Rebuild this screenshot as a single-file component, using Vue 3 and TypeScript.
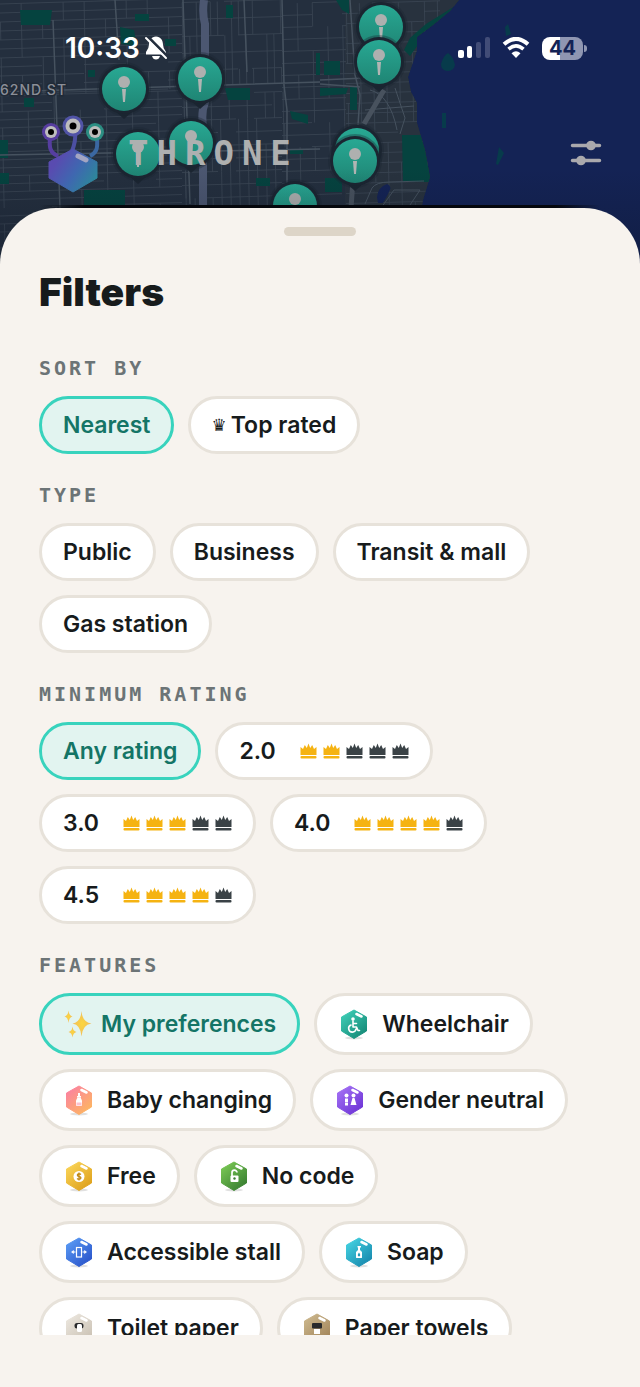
<script setup lang="ts">
import { ref } from 'vue'

type Feature = { id: string; label: string; from?: string; to?: string }

const sort = ref('Nearest')
const rating = ref('Any rating')
const chosenTypes = ref<string[]>([])
const chosenFeatures = ref<string[]>(['prefs'])

const types = ['Public', 'Business', 'Transit & mall', 'Gas station']
const ratings = [
  { label: '2.0', crowns: 2 },
  { label: '3.0', crowns: 3 },
  { label: '4.0', crowns: 4 },
  { label: '4.5', crowns: 4 },
]
const features: Feature[] = [
  { id: 'prefs', label: 'My preferences' },
  { id: 'wheelchair', label: 'Wheelchair', from: '#3fd0b8', to: '#138573' },
  { id: 'baby', label: 'Baby changing', from: '#fb7fa4', to: '#fdba5c' },
  { id: 'gender', label: 'Gender neutral', from: '#a573f5', to: '#6a30d4' },
  { id: 'free', label: 'Free', from: '#fbd65a', to: '#dc9d17' },
  { id: 'nocode', label: 'No code', from: '#7ccb55', to: '#34792f' },
  { id: 'stall', label: 'Accessible stall', from: '#5b9df5', to: '#2750c8' },
  { id: 'soap', label: 'Soap', from: '#45d4e2', to: '#1584ab' },
  { id: 'tp', label: 'Toilet paper', from: '#ece7df', to: '#c9c0b2' },
  { id: 'towels', label: 'Paper towels', from: '#cdb98f', to: '#a08257' },
]

function toggle(list: string[], id: string): string[] {
  return list.includes(id) ? list.filter((x) => x !== id) : [...list, id]
}

const pins = [
  { x: 381, y: 27 },
  { x: 379, y: 62 },
  { x: 124, y: 89 },
  { x: 200, y: 79 },
  { x: 191, y: 143 },
  { x: 138, y: 154 },
  { x: 357, y: 150 },
  { x: 355, y: 161 },
  { x: 295, y: 206 },
]

let seed = 11
function rand(): number {
  seed = (seed * 16807) % 2147483647
  return seed / 2147483647
}

/* Street blocks: a slightly tilted lattice with random gaps. */
function lattice(x0: number, y0: number, x1: number, y1: number, sx: number, sy: number): string {
  let d = ''
  for (let y = y0; y <= y1; y += sy) {
    for (let x = x0; x < x1; x += sx * 2) {
      if (rand() < 0.86) {
        const e = Math.min(x + sx * 2, x1)
        d += `M${x} ${(y - x * 0.03).toFixed(1)}L${e} ${(y - e * 0.03).toFixed(1)}`
      }
    }
  }
  for (let x = x0; x <= x1; x += sx) {
    for (let y = y0; y < y1; y += sy * 2) {
      if (rand() < 0.7) {
        const e = Math.min(y + sy * 2, y1)
        d += `M${(x + y * 0.02).toFixed(1)} ${(y - x * 0.03).toFixed(1)}L${(x + e * 0.02).toFixed(1)} ${(e - x * 0.03).toFixed(1)}`
      }
    }
  }
  return d
}
const streets = [
  lattice(0, 4, 182, 96, 21, 9),
  lattice(0, 96, 182, 280, 26, 8),
  lattice(182, 8, 282, 92, 7, 17),
  lattice(182, 100, 282, 240, 9, 13),
  lattice(282, 12, 346, 240, 15, 12),
  lattice(346, 14, 440, 240, 13, 10),
].join('')
</script>

<template>
  <div class="screen">
    <svg class="map" viewBox="0 0 640 280" preserveAspectRatio="xMidYMin slice" aria-hidden="true">
      <defs>
        <clipPath id="land">
          <path d="M0 0H459L450 11L433 25L417 37L417 50L408 77L411 92L417 103L417 123L425 150L430 177L423 200L410 280H0Z" />
        </clipPath>
        <linearGradient id="pinFill" x1="0" y1="0" x2="0" y2="1">
          <stop offset="0" stop-color="#28a893" />
          <stop offset="1" stop-color="#1f8574" />
        </linearGradient>
        <linearGradient id="shade" x1="0" y1="0" x2="0" y2="1">
          <stop offset="0.6" stop-color="#0c1424" stop-opacity="0" />
          <stop offset="0.85" stop-color="#0c1424" stop-opacity="0.25" />
        </linearGradient>
        <linearGradient id="edge" x1="0" y1="0" x2="1" y2="0">
          <stop offset="0" stop-color="#05070c" stop-opacity="0" />
          <stop offset="0.08" stop-color="#05070c" />
          <stop offset="0.92" stop-color="#05070c" />
          <stop offset="1" stop-color="#05070c" stop-opacity="0" />
        </linearGradient>
      </defs>
      <rect width="640" height="280" fill="#142355" />
      <g clip-path="url(#land)">
        <rect width="460" height="280" fill="#242f3e" />
        <rect x="345" width="120" height="280" fill="#28323e" />
        <path :d="streets" fill="none" stroke="#3b4654" stroke-width="0.8" />
        <path
          fill="#05433f"
          d="M20 10H52L50 25H21ZM135 14H149V21H135ZM120 27L134 30L137 46L121 44ZM226 5H233V18H226ZM225 88H250V100H228ZM24 98H34V107H24ZM0 140H8V158H0ZM0 173H9V184H0ZM84 190H125V206H84ZM290 111L308 115V124L292 119ZM316 53H320V75H316ZM324 61H340V75H324ZM320 88H348L346 94L320 96ZM350 87H357V110H350ZM336 0H349V14L342 10ZM402 135H440V182H403ZM426 24L455 6V20L436 32L420 42L410 56L404 50L410 38ZM256 178H270V186H256ZM290 150H303V154H290ZM325 178H342V192H325ZM165 39H176V46H165ZM88 70H95V77H88Z"
        />
        <g fill="none" stroke="#46525f" stroke-width="1.5">
          <path d="M0 92L320 82M183 0L190 204M282 0L284 85L287 110V208M0 155L320 149M53 20L60 208M320 80L365 78M320 84L360 87M350 0L355 75L360 95L358 125M244 0L247 72M115 0L119 60" />
          <path d="M365 204L372 188Q376 182 390 182L424 181M381 208L394 190H420L408 208M370 90Q390 95 397 130M365 110L414 106M395 88L405 118L400 134" stroke-width="1" />
        </g>
        <path d="M204 0Q202 14 205 24L205 102Q201 112 203 126V208" fill="none" stroke="#4c5771" stroke-width="8" />
        <path d="M384 90L364 124M353 180L351 208" fill="none" stroke="#48525e" stroke-width="5" />
        <path d="M377 197Q378 187 387 184Q393 186 388 194L383 203H378Z" fill="#142355" />
      </g>
      <path fill="#073b4b" d="M441 64Q443 56 448 53Q453 56 455 65Q454 71 447 71Q441 70 441 64ZM505 27L508 24L511 34L506 36ZM442 113H446V128H442ZM499 147L504 153L498 165L496 164Z" />
      <text class="street" x="0" y="95">62ND ST</text>
      <g v-for="p in pins" :key="`${p.x}-${p.y}`" :transform="`translate(${p.x} ${p.y})`">
        <path d="M-9 22L0 30L9 22Z" fill="#1b2531" />
        <circle r="27" fill="#1b2531" opacity="0.35" />
        <circle r="25" fill="#1b2531" />
        <circle r="22" fill="url(#pinFill)" />
        <path d="M-2 0H2L1 13H-1Z" fill="#b1b5b3" />
        <circle cy="-7" r="6" fill="#aeb0af" />
      </g>
      <rect width="640" height="280" fill="url(#shade)" />
      <rect x="40" y="205" width="560" height="5" fill="url(#edge)" />
    </svg>

    <header class="top">
      <div class="status">
        <div class="clock">
          <span>10:33</span>
          <svg width="24" height="24" viewBox="0 0 24 24" aria-hidden="true">
            <path d="M12 0.500C7.500 1 5 4 5 8.500Q5 12.500 2 16V18.500H22V16Q19 12.500 19 8.500C19 4 16.500 1 12 0.500Z" fill="#fff" />
            <path d="M8 20H16Q15 23.500 12 23.500Q9 23.500 8 20Z" fill="#fff" />
            <path d="M3 0L23 20" stroke="#242f3e" stroke-width="3" />
            <path d="M2 2L22 22" stroke="#fff" stroke-width="2" stroke-linecap="round" />
          </svg>
        </div>
        <div class="signals">
          <svg width="32" height="22" viewBox="0 0 32 22" aria-hidden="true">
            <rect y="13" width="6" height="8" rx="2" fill="#fff" />
            <rect x="9" y="9" width="5" height="12" rx="2" fill="#fff" />
            <rect x="18" y="5" width="5" height="16" rx="2" fill="#414c77" />
            <rect x="27" y="0" width="5" height="21" rx="2" fill="#414c77" />
          </svg>
          <svg width="28" height="22" viewBox="0 0 28 22" aria-hidden="true">
            <path d="M2 7.200Q14-3.500 26 7.200" fill="none" stroke="#fff" stroke-width="4" />
            <path d="M6.500 12.200Q14 5.500 21.500 12.200" fill="none" stroke="#fff" stroke-width="3.600" />
            <path d="M9.500 16.200Q14 12.400 18.500 16.200L14 21Z" fill="#fff" />
          </svg>
          <div class="power"><span class="battery">44</span><i class="nub"></i></div>
        </div>
      </div>
      <div class="brand">
        <svg class="logo" width="64" height="80" viewBox="0 0 64 80" aria-hidden="true">
          <defs>
            <linearGradient id="body" x1="0" y1="0.200" x2="1" y2="0.800">
              <stop offset="0.150" stop-color="#594bb0" />
              <stop offset="0.550" stop-color="#3f67b0" />
              <stop offset="1" stop-color="#2a8c98" />
            </linearGradient>
          </defs>
          <g fill="none" stroke-width="4">
            <path d="M8 25C7 34 8 40 16 43" stroke="#563ea0" />
            <path d="M33 20Q34 28 30 38" stroke="#4c4fa2" />
            <path d="M55 26C56 36 54 40 48 43" stroke="#3b68a2" />
          </g>
          <path d="M31 36L55 49V65L31 79L7 65V49Z" fill="url(#body)" stroke="url(#body)" stroke-width="1" stroke-linejoin="round" />
          <path d="M36 43L44 47" stroke="#a3a5c2" stroke-width="5" stroke-linecap="round" />
          <circle cx="9" cy="19" r="9" fill="#573da0" />
          <circle cx="31" cy="13" r="10.500" fill="#5053a6" />
          <circle cx="53" cy="19" r="9" fill="#2c8e83" />
          <g fill="#bdbdbd"><circle cx="9" cy="19" r="6" /><circle cx="31" cy="13" r="7.500" /><circle cx="53" cy="19" r="6" /></g>
          <g fill="#000"><circle cx="9" cy="19" r="3" /><circle cx="31" cy="13" r="3.500" /><circle cx="53" cy="19" r="3" /></g>
        </svg>
        <span class="wordmark">THRONE</span>
        <button class="tune" type="button" aria-label="Filters">
          <svg width="32" height="26" viewBox="0 0 32 26" aria-hidden="true">
            <g stroke="#aaa9ad" stroke-width="3.500" stroke-linecap="round"><path d="M2.500 5.500H29.500M2.500 20.500H29.500" /></g>
            <circle cx="21" cy="5.500" r="4.800" fill="#aaa9ad" />
            <circle cx="11" cy="20.500" r="4.800" fill="#aaa9ad" />
          </svg>
        </button>
      </div>
    </header>

    <main class="sheet">
      <div class="handle"></div>
      <h1>Filters</h1>
      <div class="scroll">
        <section>
          <h2>SORT BY</h2>
          <div class="chips">
            <button type="button" class="chip" :aria-pressed="sort === 'Nearest'" @click="sort = 'Nearest'">Nearest</button>
            <button type="button" class="chip top-rated" :aria-pressed="sort === 'Top rated'" @click="sort = 'Top rated'">
              <span class="queen">♛</span>Top rated
            </button>
          </div>
        </section>

        <section>
          <h2>TYPE</h2>
          <div class="chips">
            <button
              v-for="t in types" :key="t" type="button" class="chip"
              :aria-pressed="chosenTypes.includes(t)" @click="chosenTypes = toggle(chosenTypes, t)"
            >{{ t }}</button>
          </div>
        </section>

        <section>
          <h2>MINIMUM RATING</h2>
          <div class="chips">
            <button type="button" class="chip" :aria-pressed="rating === 'Any rating'" @click="rating = 'Any rating'">Any rating</button>
            <button
              v-for="r in ratings" :key="r.label" type="button" class="chip rate"
              :aria-pressed="rating === r.label" @click="rating = r.label"
            >
              <span>{{ r.label }}</span>
              <span class="crowns">
                <svg v-for="n in 5" :key="n" width="17" height="16" viewBox="0 0 17 16" :class="{ lit: n <= r.crowns }" aria-hidden="true">
                  <path d="M0.500 12V4L3 6L4.800 2L6.800 5L8.500 0.500L10.200 5L12.200 2L14 6L16.500 4V12Z" />
                  <rect x="0.500" y="13" width="16" height="2.600" rx="1" />
                </svg>
              </span>
            </button>
          </div>
        </section>

        <section>
          <h2>FEATURES</h2>
          <div class="chips">
            <button
              v-for="f in features" :key="f.id" type="button" class="chip feature" :class="{ prefs: !f.from }"
              :aria-pressed="chosenFeatures.includes(f.id)" @click="chosenFeatures = toggle(chosenFeatures, f.id)"
            >
              <svg v-if="!f.from" width="30" height="30" viewBox="0 0 30 30" aria-hidden="true">
                <defs>
                  <radialGradient id="spark"><stop offset="0" stop-color="#fcd63c" /><stop offset="1" stop-color="#efbd62" /></radialGradient>
                </defs>
                <g fill="url(#spark)">
                  <path d="M18.500 2Q19.300 13.200 28.500 14.500Q19.300 15.800 18.500 27.500Q17.700 15.800 9.500 14.500Q17.700 13.200 18.500 2Z" />
                  <path d="M5.500 1.500Q6 6.700 9.500 7.500Q6 8.300 5.500 14Q5 8.300 1.500 7.500Q5 6.700 5.500 1.500Z" />
                  <path d="M9.500 17.500Q10 22.200 13.500 23Q10 23.800 9.500 28.500Q9 23.800 5.500 23Q9 22.200 9.500 17.500Z" />
                </g>
              </svg>
              <svg v-else width="32" height="32" viewBox="0 0 32 32" aria-hidden="true">
                <defs>
                  <linearGradient :id="`hex-${f.id}`" x1="0.100" y1="0" x2="0.900" y2="1">
                    <stop offset="0" :stop-color="f.from" /><stop offset="1" :stop-color="f.to" />
                  </linearGradient>
                </defs>
                <ellipse cx="16" cy="30" rx="9" ry="1.500" fill="#000" opacity="0.120" />
                <path d="M16 2L28.500 9V23L16 30.500L3.500 23V9Z" :fill="`url(#hex-${f.id})`" :stroke="`url(#hex-${f.id})`" stroke-linejoin="round" />
                <path d="M18.500 6L23.500 8.500" stroke="#fff" stroke-width="2.600" stroke-linecap="round" />

                <g v-if="f.id === 'wheelchair'" fill="none" stroke="#fff" stroke-width="1.600" stroke-linecap="round" stroke-linejoin="round">
                  <circle cx="15" cy="11" r="1" fill="#fff" />
                  <path d="M15 13V19H18.500L20 22.500H21.500M15 15.500H18.500M13 17A3.700 3.700 0 1 0 18 21" />
                </g>
                <g v-else-if="f.id === 'baby'">
                  <path d="M15 9H17V12H15ZM14 12H18V13.500H14Z" fill="#fff" />
                  <path d="M14.500 13.500H17.500L19 16.500V21Q19 22 18 22H14Q13 22 13 21V16.500Z" fill="#fff" />
                  <path d="M13.500 18.500H18.500V21.500H13.500Z" fill="#fdc3d0" />
                </g>
                <g v-else-if="f.id === 'gender'" fill="#fff">
                  <circle cx="12.500" cy="11.500" r="2" /><circle cx="19.500" cy="11.500" r="2" />
                  <path d="M11 14.500H14V18H11ZM11 18.500H14V21.500H11ZM18.500 14H20.500L22.500 21H16.500Z" />
                </g>
                <g v-else-if="f.id === 'free'">
                  <circle cx="16" cy="16.500" r="5.500" fill="#fff" />
                  <path d="M18 14.500Q16 13 14.500 14.500Q14 16 16 16.500Q18.500 17 17.700 18.500Q16 20 14 18.500M16 12.500V20.500" fill="none" stroke="#c08a18" stroke-width="1.300" />
                </g>
                <g v-else-if="f.id === 'nocode'">
                  <path d="M14 16V12.800A2.500 2.500 0 0 1 19 12.500" fill="none" stroke="#fff" stroke-width="1.700" />
                  <rect x="12.500" y="15.500" width="8" height="6.500" rx="1" fill="#fff" />
                  <circle cx="16.500" cy="18.500" r="1.200" fill="#3f7f35" />
                </g>
                <g v-else-if="f.id === 'stall'" fill="none" stroke="#fff">
                  <rect x="13.500" y="11.500" width="5" height="9.500" stroke-width="1.200" />
                  <path d="M9 16H12.500M19.500 16H23" stroke-width="1" />
                  <path d="M8.500 16L10.500 14.500V17.500ZM23.500 16L21.500 14.500V17.500Z" fill="#fff" stroke-width="0.600" />
                </g>
                <g v-else-if="f.id === 'soap'">
                  <path d="M14.500 10H18V11.500H17V14H15V11.500H14.500ZM15 14H17L19 16V21.500Q19 22 18 22H14Q13 22 13 21.500V16Z" fill="#fff" />
                  <path d="M16 16.500Q18.500 19.500 16 20.500Q13.500 19.500 16 16.500Z" fill="#229bbb" />
                </g>
                <g v-else-if="f.id === 'tp'">
                  <rect x="11.500" y="11" width="9" height="5.500" rx="2.500" fill="#292a2c" />
                  <rect x="14" y="12" width="5" height="8" rx="1.500" fill="#fff" />
                </g>
                <g v-else>
                  <rect x="11" y="11" width="10" height="5.500" rx="1" fill="#292a2c" />
                  <rect x="13" y="17" width="6" height="5" fill="#fff" />
                </g>
              </svg>
              <span>{{ f.label }}</span>
            </button>
          </div>
        </section>
      </div>
    </main>
  </div>
</template>

<style>
html,
body {
  margin: 0;
  background: #f7f3ee;
}
</style>

<style scoped>
.screen {
  position: relative;
  display: flex;
  flex-direction: column;
  height: 100vh;
  overflow: hidden;
  background: #142355;
  font-family: Inter, "Noto Sans", sans-serif;
}
.map {
  position: absolute;
  top: 0;
  left: 0;
  width: 100%;
  height: 280px;
}
.street {
  font: 500 14px Inter, sans-serif;
  letter-spacing: 1px;
  fill: #8b8f97;
  stroke: #202a37;
  stroke-width: 3px;
  paint-order: stroke;
}
.top {
  position: relative;
  flex: none;
}
.status {
  display: flex;
  justify-content: space-between;
  align-items: center;
  height: 96px;
  padding: 0 53px 0 65px;
}
.clock {
  display: flex;
  align-items: center;
  gap: 4px;
  color: #fff;
  font-size: 28px;
  font-weight: 600;
  line-height: 32px;
}
.signals {
  display: flex;
  align-items: center;
  gap: 12px;
}
.power {
  display: flex;
  align-items: center;
  gap: 1px;
}
.battery {
  width: 41px;
  border-radius: 8px;
  background: linear-gradient(90deg, #fff 44%, #8f96b2 44%);
  color: #142355;
  font-size: 20px;
  font-weight: 700;
  line-height: 23px;
  text-align: center;
}
.nub {
  width: 3px;
  height: 7px;
  border-radius: 0 4px 4px 0;
  background: #8f96b2;
}
.brand {
  display: flex;
  align-items: center;
  height: 112px;
  padding: 2px 38px 0 42px;
  box-sizing: border-box;
}
.wordmark {
  margin-left: 22px;
  color: #aeb0b0;
  font: 700 34px/40px "DejaVu Sans Mono", monospace;
  letter-spacing: 8px;
}
.tune {
  display: flex;
  margin-left: auto;
  padding: 0;
  border: 0;
  background: none;
}
.sheet {
  position: relative;
  display: flex;
  flex: 1;
  flex-direction: column;
  min-height: 0;
  padding: 19px 39px 52px;
  border-radius: 56px 56px 0 0;
  background: #f7f3ee;
}
.handle {
  flex: none;
  align-self: center;
  width: 72px;
  height: 9px;
  border-radius: 5px;
  background: #ddd5c8;
}
h1 {
  flex: none;
  margin: 32px 0 40px;
  color: #171b1c;
  font-size: 39px;
  font-weight: 900;
  line-height: 48px;
}
.scroll {
  flex: 1;
  min-height: 0;
  overflow-y: auto;
  scrollbar-width: none;
}
section {
  margin-bottom: 29px;
}
h2 {
  margin: 0 0 16px;
  color: #6c7476;
  font: 700 20px/24px "DejaVu Sans Mono", monospace;
  letter-spacing: 3px;
}
.chips {
  display: flex;
  flex-wrap: wrap;
  gap: 14px;
}
.chip {
  display: flex;
  align-items: center;
  height: 58px;
  padding: 0 21px;
  border: 3px solid #e7e2da;
  border-radius: 32px;
  background: #fff;
  color: #171b1c;
  font: 600 23px/28px Inter, "Noto Sans", sans-serif;
  white-space: nowrap;
}
.chip[aria-pressed="true"] {
  border-color: #38d3bd;
  background: #e2f4f0;
  color: #147566;
}
.top-rated {
  gap: 4px;
  padding: 0 21px 0 20px;
}
.queen {
  font: 400 17px/28px "DejaVu Sans", sans-serif;
}
.rate {
  gap: 24px;
}
.crowns {
  display: flex;
  gap: 6px;
  fill: #3a4246;
}
.lit {
  fill: #f5b312;
}
.feature {
  gap: 12px;
  height: 62px;
}
.prefs {
  gap: 8px;
}
</style>
